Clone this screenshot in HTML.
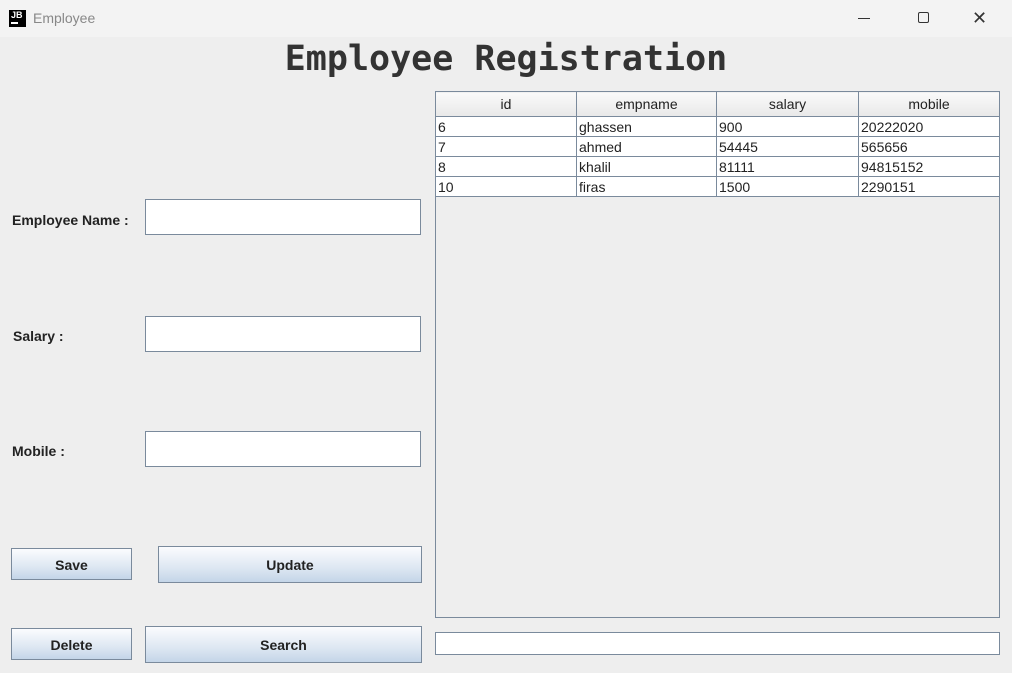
<!DOCTYPE html><html><head><style>
body{margin:0;width:1012px;height:673px;background:#eeeeee;position:relative;overflow:hidden;font-family:"Liberation Sans",sans-serif}
.a{position:absolute;box-sizing:border-box}
.tb{left:0;top:0;width:1012px;height:37px;background:#f3f3f3}
.lbl{font-weight:bold;font-size:14px;color:#222}
.tf{background:#fff;border:1px solid #7a8a9c}
.btn{border:1px solid #7a8a9c;background:linear-gradient(#fbfcfe,#dde7f2 60%,#c4d5e8);font-weight:bold;font-size:14px;color:#222;display:flex;align-items:center;justify-content:center}
table{border-collapse:collapse;font-size:14px;color:#222}
td,th{border:1px solid #7a8a9c;padding:0 2px;height:20px;box-sizing:border-box;text-align:left;font-weight:normal;line-height:18px}
th{text-align:center;background:linear-gradient(#fafafa,#e8e8e8);height:25px}
td{background:#fff}
</style></head><body>
<div class="a tb"></div>
<div class="a" style="left:9px;top:10px;width:17px;height:17px;background:#000;color:#fff;font-size:9px;font-weight:bold;line-height:10px;padding-left:2px">JB<div style="width:7px;height:2px;background:#fff;margin-top:2px"></div></div>
<div class="a" style="left:33px;top:10px;font-size:14px;color:#888">Employee</div>
<div class="a" style="left:858px;top:18px;width:12px;height:1px;background:#333"></div>
<div class="a" style="left:918px;top:12px;width:11px;height:11px;border:1px solid #333;border-radius:2px"></div>
<div class="a" style="left:972px;top:10px;font-size:18px;color:#333;line-height:16px">✕</div>
<div class="a" style="left:0;width:1012px;top:39px;text-align:center;font-family:'DejaVu Sans Mono',monospace;font-weight:bold;font-size:35px;color:#333">Employee Registration</div>
<div class="a lbl" style="left:12px;top:212px">Employee Name :</div>
<div class="a lbl" style="left:13px;top:328px">Salary :</div>
<div class="a lbl" style="left:12px;top:443px">Mobile :</div>
<div class="a tf" style="left:145px;top:199px;width:276px;height:36px"></div>
<div class="a tf" style="left:145px;top:316px;width:276px;height:36px"></div>
<div class="a tf" style="left:145px;top:431px;width:276px;height:36px"></div>
<div class="a btn" style="left:11px;top:548px;width:121px;height:32px;padding-top:2px">Save</div>
<div class="a btn" style="left:158px;top:546px;width:264px;height:37px">Update</div>
<div class="a btn" style="left:11px;top:628px;width:121px;height:32px;padding-top:2px">Delete</div>
<div class="a btn" style="left:145px;top:626px;width:277px;height:37px">Search</div>
<div class="a" style="left:435px;top:91px;width:565px;height:527px;border:1px solid #7a8a9c"></div>
<table class="a" style="left:435px;top:91px;width:565px">
<tr><th style="width:141px">id</th><th style="width:140px">empname</th><th style="width:142px">salary</th><th>mobile</th></tr>
<tr><td>6</td><td>ghassen</td><td>900</td><td>20222020</td></tr>
<tr><td>7</td><td>ahmed</td><td>54445</td><td>565656</td></tr>
<tr><td>8</td><td>khalil</td><td>81111</td><td>94815152</td></tr>
<tr><td>10</td><td>firas</td><td>1500</td><td>2290151</td></tr>
</table>
<div class="a tf" style="left:435px;top:632px;width:565px;height:23px"></div>
</body></html>
